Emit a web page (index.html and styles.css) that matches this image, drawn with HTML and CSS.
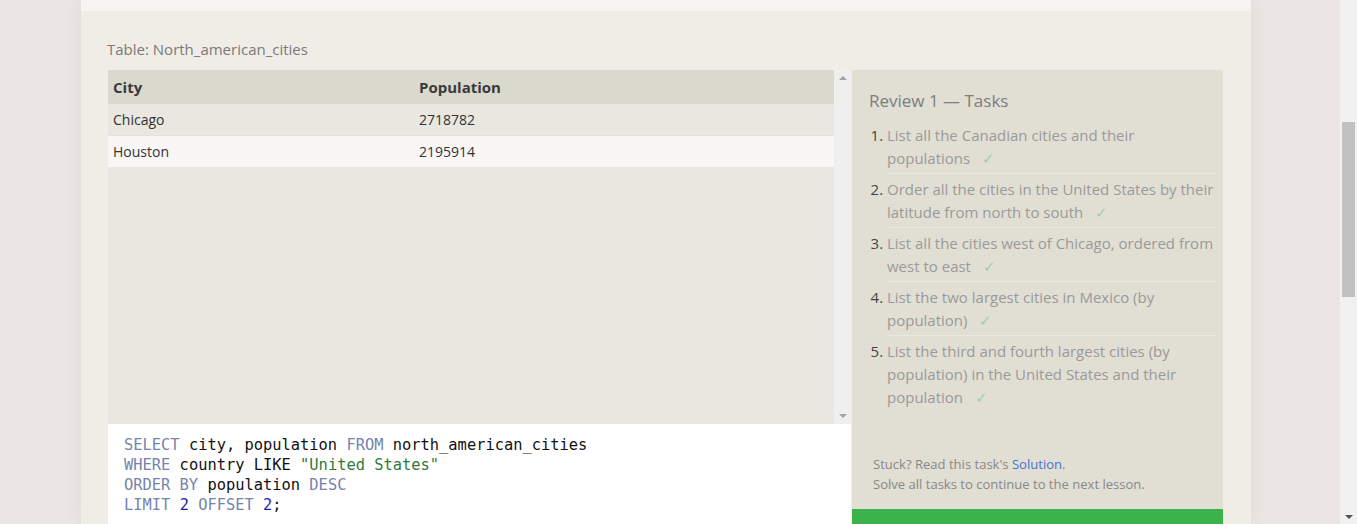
FILE: index.html
```html
<!DOCTYPE html>
<html>
<head>
<meta charset="utf-8">
<link rel="stylesheet" href="styles.css">
</head>
<body>
<div class="page">
  <div class="viewport">
    <div class="card">
      <div class="card-top"></div>
      <div class="card-body">
        <div class="table-label">Table: North_american_cities</div>
        <div class="workspace">
          <div class="left">
            <div class="results">
              <div class="table-wrap">
                <table class="data">
                  <thead>
                    <tr><th class="c1">City</th><th>Population</th></tr>
                  </thead>
                  <tbody>
                    <tr class="odd"><td class="c1">Chicago</td><td>2718782</td></tr>
                    <tr class="even"><td class="c1">Houston</td><td>2195914</td></tr>
                  </tbody>
                </table>
              </div>
              <div class="inner-scroll">
                <span class="arrow-up"></span>
                <span class="arrow-down"></span>
              </div>
            </div>
            <div class="editor">
<pre><span class="kw">SELECT</span> city, population <span class="kw">FROM</span> north_american_cities
<span class="kw">WHERE</span> country LIKE <span class="str">"United States"</span>
<span class="kw">ORDER BY</span> population <span class="kw">DESC</span>
<span class="kw">LIMIT</span> <span class="num">2</span> <span class="kw">OFFSET</span> <span class="num">2</span>;</pre>
            </div>
          </div>
          <div class="panel">
            <div class="panel-main">
              <h3 class="panel-title">Review 1 — Tasks</h3>
              <ol class="tasks">
                <li>List all the Canadian cities and their populations <span class="check">✓</span></li>
                <li>Order all the cities in the United States by their latitude from north to south <span class="check">✓</span></li>
                <li>List all the cities west of Chicago, ordered from west to east <span class="check">✓</span></li>
                <li>List the two largest cities in Mexico (by population) <span class="check">✓</span></li>
                <li class="last">List the third and fourth largest cities (by population) in the United States and their population <span class="check">✓</span></li>
              </ol>
            </div>
            <div class="panel-foot">
              <p>Stuck? Read this task's <a href="#">Solution</a>.</p>
              <p>Solve all tasks to continue to the next lesson.</p>
            </div>
            <div class="continue"></div>
          </div>
        </div>
      </div>
    </div>
  </div>
  <div class="scrollbar">
    <div class="sb-track">
      <div class="sb-thumb"></div>
    </div>
    <span class="sb-down"></span>
  </div>
</div>
</body>
</html>
```

FILE: styles.css
```css
html, body {
  margin: 0;
  padding: 0;
  height: 524px;
  overflow: hidden;
}
body {
  background: #ebe6e3;
  font-family: "Open Sans", "Noto Sans", sans-serif;
}
.page {
  display: flex;
  height: 524px;
}
.viewport {
  flex: 1;
  min-width: 0;
}
.card {
  width: 1170px;
  margin-left: 81px;
  background: #f0ede6;
  box-shadow: 0 0 18px rgba(0, 0, 0, 0.06);
  height: 524px;
}
.card-top {
  height: 11px;
  background: #f7f5f1;
}
.card-body {
  padding: 28px 28px 0 27px;
}
.table-label {
  font-size: 15px;
  line-height: 20px;
  color: #7a7a7a;
  margin-bottom: 11px;
  margin-left: -1px;
}
.workspace {
  display: flex;
  gap: 1px;
}
.left {
  width: 743px;
  display: flex;
  flex-direction: column;
}
.results {
  height: 354px;
  display: flex;
  background: #e9e7df;
}
.table-wrap {
  flex: 1;
}
.data {
  width: 100%;
  border-collapse: collapse;
  color: #333;
}
.data th {
  background: #dad9ce;
  height: 34px;
  padding: 0 5px;
  text-align: left;
  font-size: 15px;
  font-weight: 700;
  color: #3a3a3a;
}
.data td {
  height: 31px;
  padding: 0 5px;
  font-size: 14px;
}
.data .c1 {
  width: 296px;
}
.data tr.odd td {
  background: #e9e7e0;
  border-bottom: 1px solid #e3e1da;
}
.data tr.even td {
  background: #f8f7f6;
}
.inner-scroll {
  width: 17px;
  background: #f0efef;
  display: flex;
  flex-direction: column;
  justify-content: space-between;
  align-items: center;
  padding: 6px 0;
  box-sizing: border-box;
}
.arrow-up {
  width: 0;
  height: 0;
  border-left: 4px solid transparent;
  border-right: 4px solid transparent;
  border-bottom: 4px solid #a3a3a3;
}
.arrow-down {
  width: 0;
  height: 0;
  border-left: 4px solid transparent;
  border-right: 4px solid transparent;
  border-top: 4px solid #a3a3a3;
}
.editor {
  background: #fff;
  height: 130px;
  padding: 11px 16px 0;
}
.editor pre {
  margin: 0;
  font-family: "DejaVu Sans Mono", "Liberation Mono", monospace;
  font-size: 15.4px;
  line-height: 20px;
  color: #111;
}
.kw { color: #7584ad; }
.str { color: #2f7a3a; }
.num { color: #1b1bb0; }
.panel {
  flex: 1;
  background: #e1dfd4;
  display: flex;
  flex-direction: column;
  height: 484px;
}
.panel-main {
  padding: 19px 7px 0 17px;
  flex: 1;
}
.panel-title {
  margin: 0;
  font-size: 17px;
  line-height: 24px;
  font-weight: 400;
  color: #7d7d7d;
}
.tasks {
  margin: 11px 0 0;
  padding: 0 0 0 18px;
  font-size: 15px;
  line-height: 23px;
  color: #9a9a9a;
}
.tasks li {
  padding-bottom: 3px;
  margin-bottom: 4px;
  border-bottom: 1px solid #ebe9e2;
}
.tasks li.last {
  border-bottom: none;
}
.tasks li::marker {
  color: #444;
}
.check {
  display: inline-block;
  line-height: 20px;
  color: #9fcea5;
  margin-left: 8px;
}
.panel-foot {
  padding: 0 8px 15px 21px;
  font-size: 13.05px;
  line-height: 20px;
  color: #888;
}
.panel-foot p {
  margin: 0;
}
.panel-foot a {
  color: #4a72d0;
  text-decoration: none;
}
.continue {
  height: 45px;
  background: #3bb34a;
}
.scrollbar {
  width: 17px;
  background: #f1f1f1;
  display: flex;
  flex-direction: column;
  align-items: center;
}
.sb-track {
  flex: 1;
  padding-top: 122px;
}
.sb-thumb {
  width: 13px;
  height: 175px;
  background: #c1c1c1;
}
.sb-down {
  width: 0;
  height: 0;
  border-left: 4px solid transparent;
  border-right: 4px solid transparent;
  border-top: 4px solid #505050;
  margin-bottom: 5px;
}
```
